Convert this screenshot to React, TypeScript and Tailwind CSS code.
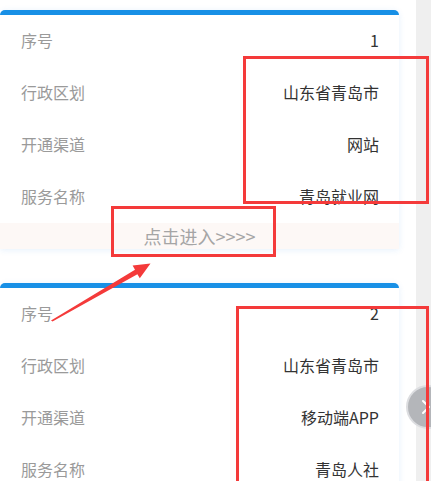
import React from "react";

type Row = { label: string; value: string };

const cards: Row[][] = [
  [
    { label: "序号", value: "1" },
    { label: "行政区划", value: "山东省青岛市" },
    { label: "开通渠道", value: "网站" },
    { label: "服务名称", value: "青岛就业网" },
  ],
  [
    { label: "序号", value: "2" },
    { label: "行政区划", value: "山东省青岛市" },
    { label: "开通渠道", value: "移动端APP" },
    { label: "服务名称", value: "青岛人社" },
  ],
];

const ServiceCard = ({ rows, showEnter }: { rows: Row[]; showEnter: boolean }) => {
  return (
    <div className="w-[399px] bg-white rounded-t-[6px] shadow-[0_1px_6px_rgba(40,130,230,0.12)]">
      <div className="h-[5px] bg-[#1890e6] rounded-t-[6px]" />
      {rows.map((row) => (
        <div key={row.label} className="h-[52px] pb-[3px] flex items-center justify-between pl-[21px] pr-[20px]">
          <span className="text-[16px] text-[#9a9a9a]">{row.label}</span>
          <span className="text-[16px] text-[#333]">{row.value}</span>
        </div>
      ))}
      {showEnter && (
        <div className="h-[26px] bg-[#fdf8f6] flex items-center justify-center text-[18px] text-[#a5a5a5]">
          点击进入&gt;&gt;&gt;&gt;
        </div>
      )}
    </div>
  );
};

export default function App() {
  return (
    <div
      className="relative w-[431px] h-[481px] overflow-hidden bg-white flex"
      style={{ fontFamily: '"Noto Sans CJK SC", "Noto Sans", sans-serif' }}
    >
      <div className="w-[416px] flex flex-col gap-[34px] pt-[10px]">
        {cards.map((rows, i) => (
          <ServiceCard key={i} rows={rows} showEnter={i === 0} />
        ))}
      </div>
      <div className="flex-1 bg-[#efefef]" />

      {/* side arrow button */}
      <div className="absolute left-[406px] top-[385px] w-[44px] h-[44px] rounded-full bg-[#b4b6ba] border-2 border-[#dcdde0] flex items-center pl-[13px]">
        <svg width="10" height="16" viewBox="0 0 10 16" fill="none">
          <path d="M2 2l6 6-6 6" stroke="#fff" strokeWidth="2" strokeLinecap="round" strokeLinejoin="round" />
        </svg>
      </div>

      {/* annotation boxes */}
      <div className="absolute left-[243px] top-[56px] w-[186px] h-[148px] border-[3px] border-[#f43a3a]" />
      <div className="absolute left-[111px] top-[206px] w-[165px] h-[51px] border-[3px] border-[#f43a3a]" />
      <div className="absolute left-[236px] top-[306px] w-[193px] h-[190px] border-[3px] border-[#f43a3a]" />

      {/* annotation arrow */}
      <svg className="absolute left-0 top-0" width="431" height="481" viewBox="0 0 431 481">
        <polygon
          points="51,320.5 135,269.7 132.6,265.6 150.5,263.5 139.8,278.2 137.4,274.2 52.5,321.5"
          fill="#f43a3a"
        />
      </svg>
    </div>
  );
}
